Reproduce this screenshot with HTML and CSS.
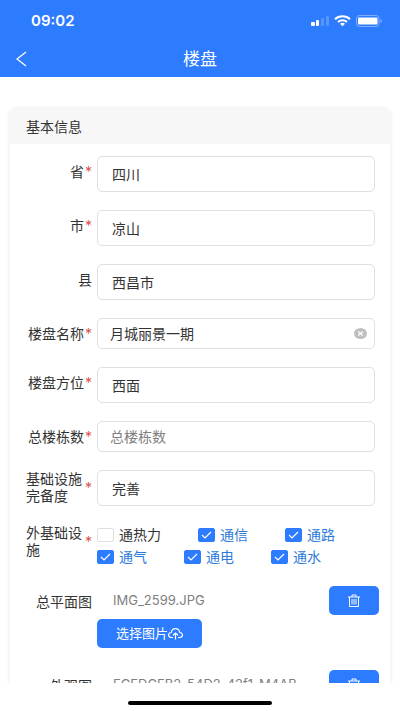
FILE: index.html
```html
<!DOCTYPE html>
<html lang="zh-CN">
<head>
<meta charset="utf-8">
<meta name="viewport" content="width=device-width, initial-scale=1">
<title>楼盘</title>
<link rel="stylesheet" href="styles.css">
</head>
<body>
<header class="top">
  <div class="status">
    <span class="time">09:02</span>
    <div class="status-icons">
      <svg width="18" height="12" viewBox="0 0 18 12" fill="#fff" aria-hidden="true">
        <rect x="0" y="7" width="4" height="4" rx="1"/><rect x="5" y="5" width="3" height="6" rx="1"/>
        <rect x="10" y="3" width="3" height="8" rx="1" opacity=".2"/><rect x="15" y="1" width="3" height="10" rx="1" opacity=".2"/>
      </svg>
      <svg width="17" height="12" viewBox="0 0 17 12" fill="none" stroke="#fff" stroke-width="2" aria-hidden="true">
        <path d="M1 4.200C5 .2 12 .2 16 4.200M4 7C6.500 4.700 10.500 4.700 13 7"/><path d="M6 8.700Q8.500 7 11 8.700L8.500 11.200Z" fill="#fff" stroke="none"/>
      </svg>
      <svg width="26" height="12" viewBox="0 0 26 12" aria-hidden="true">
        <rect x=".5" y=".5" width="22.500" height="11" rx="3" fill="none" stroke="#fff" opacity=".4"/>
        <rect x="2" y="2.500" width="19.500" height="7" rx="1" fill="#fff"/><path d="M24.500 4v4q1.500-.5 1.500-2t-1.500-2" fill="#fff" opacity=".4"/>
      </svg>
    </div>
  </div>
  <nav class="nav">
    <button class="back" type="button" aria-label="返回">
      <svg width="11" height="16" viewBox="0 0 11 16" fill="none" stroke="#fff" stroke-width="1.300"><path d="M10 1L1 8l9 7"/></svg>
    </button>
    <h1>楼盘</h1>
  </nav>
</header>
<main class="content">
  <form class="card">
    <h2>基本信息</h2>
    <div class="rows">
      <div class="row"><label for="prov"><span>省</span><i>*</i></label><input class="box pick" id="prov" value="四川"></div>
      <div class="row"><label for="city"><span>市</span><i>*</i></label><input class="box pick" id="city" value="凉山"></div>
      <div class="row"><label for="county"><span>县</span></label><input class="box pick" id="county" value="西昌市"></div>
      <div class="row"><label for="name"><span>楼盘名称</span><i>*</i></label>
        <div class="box clearable"><input id="name" value="月城丽景一期">
          <button type="button" class="clear" aria-label="清除"><svg width="13" height="11" viewBox="0 0 13 11"><ellipse cx="6.500" cy="5.500" rx="6.500" ry="5.500" fill="#bfbfbf"/><path d="M4.200 3.500l4.600 4M8.800 3.500l-4.600 4" stroke="#fff" stroke-width="1.200"/></svg></button>
        </div></div>
      <div class="row"><label for="side"><span>楼盘方位</span><i>*</i></label><input class="box pick" id="side" value="西面"></div>
      <div class="row"><label for="total"><span>总楼栋数</span><i>*</i></label><input class="box" id="total" placeholder="总楼栋数"></div>
      <div class="row"><label for="infra"><span>基础设施完备度</span><i>*</i></label><input class="box pick" id="infra" value="完善"></div>
      <div class="row" role="group" aria-labelledby="outer">
        <div class="label" id="outer"><span>外基础设施</span><i>*</i></div>
        <div class="checks">
          <label><input type="checkbox"><span>通热力</span></label>
          <label><input type="checkbox" checked><span>通信</span></label>
          <label><input type="checkbox" checked><span>通路</span></label>
          <label><input type="checkbox" checked><span>通气</span></label>
          <label><input type="checkbox" checked><span>通电</span></label>
          <label><input type="checkbox" checked><span>通水</span></label>
        </div>
      </div>
      <div class="row">
        <div class="label"><span>总平面图</span></div>
        <div class="upload">
          <div class="file"><span>IMG_2599.JPG</span>
            <button type="button" class="btn del" aria-label="删除"><svg width="12" height="13" viewBox="0 0 12 13" fill="none" stroke="#fff"><path d="M0 3h12M4 3V1h4v2M1.500 3v9.500h9V3M4 5v5.500M6 5v5.500M8 5v5.500"/></svg></button></div>
          <button type="button" class="btn choose">选择图片<svg width="15" height="12" viewBox="0 0 15 12" fill="none" stroke="#fff" stroke-width="1.200"><path d="M5 9.500H3.500a2.800 2.500 0 0 1-.3-5C3.700 2 5.500.7 7.500.7s3.800 1.300 4.300 3.800a2.800 2.500 0 0 1-.3 5H10M7.500 11.500V5M5 7.200L7.500 5 10 7.200"/></svg></button>
        </div>
      </div>
      <div class="row">
        <div class="label"><span>外观图</span></div>
        <div class="upload">
          <div class="file"><span>ECEDCFB2-54D2-42f1-M4AB</span>
            <button type="button" class="btn del" aria-label="删除"><svg width="12" height="13" viewBox="0 0 12 13" fill="none" stroke="#fff"><path d="M0 3h12M4 3V1h4v2M1.500 3v9.500h9V3M4 5v5.500M6 5v5.500M8 5v5.500"/></svg></button></div>
        </div>
      </div>
    </div>
  </form>
</main>
<footer class="home"><div></div></footer>
</body>
</html>
```
FILE: styles.css
```css
* { box-sizing: border-box; }
body {
  margin: 0;
  height: 100vh;
  display: flex;
  flex-direction: column;
  background: #fff;
  color: #333;
  font: 14px/17px Inter, "Noto Sans CJK SC", sans-serif;
}
button, input { font: inherit; color: inherit; margin: 0; padding: 0; }
button { border: 0; background: none; }
svg { display: block; flex: none; }
.top { flex: none; background: #2d7bff; color: #fff; }
.status {
  height: 41px;
  padding: 0 18px 0 31px;
  display: flex;
  align-items: center;
  justify-content: space-between;
}
.time { font-size: 15px; font-weight: 600; }
.status-icons { display: flex; gap: 5px; }
.nav {
  height: 36px;
  padding: 0 16px;
  display: grid;
  grid-template-columns: 24px 1fr 24px;
  align-items: center;
}
.back { height: 24px; }
.nav h1 { margin: 0; font-size: 17px; font-weight: 400; text-align: center; }
.content { flex: 1; min-height: 0; overflow: hidden; padding: 32px 10px 0; }
.card { border-radius: 5px; box-shadow: 0 0 5px rgba(0, 0, 0, .1); }
.card h2 {
  margin: 0;
  padding: 0 16px;
  font-size: 14px;
  line-height: 35px;
  font-weight: 400;
  background: #f7f7f7;
  border-radius: 5px 5px 0 0;
}
.rows { padding: 12px 15px 18px 16px; display: grid; gap: 18px; }
.row {
  display: grid;
  grid-template-columns: 66px 1fr;
  column-gap: 5px;
  align-items: start;
}
.row > label, .label {
  min-height: 31px;
  display: flex;
  align-items: center;
  justify-content: flex-end;
}
.label i, .row > label i { flex: none; width: 8px; color: #d9534f; font-style: normal; text-align: right; }
.box {
  width: 100%;
  min-width: 0;
  height: 31px;
  padding: 0 12px;
  border: 1px solid #e0e0e0;
  border-radius: 5px;
  background: #fff;
  outline: 0;
}
.box.pick { height: 36px; padding: 0 14px; }
.box::placeholder { color: #808080; opacity: 1; }
.clearable { display: flex; align-items: center; padding-right: 7px; }
.clearable input { flex: 1; min-width: 0; border: 0; outline: 0; }
.checks { display: flex; flex-wrap: wrap; column-gap: 37px; }
.checks label { display: flex; align-items: center; gap: 5px; line-height: 22px; }
.checks input {
  appearance: none;
  width: 17px;
  height: 14px;
  border: 1px solid #e0e0e0;
  border-radius: 2px;
}
.checks input:checked {
  border-color: #2d7bff;
  background: #2d7bff url("data:image/svg+xml,%3Csvg xmlns='http://www.w3.org/2000/svg' viewBox='0 0 15 12'%3E%3Cpath d='M3 6l3 3 6-6' fill='none' stroke='white' stroke-width='1.200'/%3E%3C/svg%3E") center / 15px 12px no-repeat;
}
.checks input:checked + span { color: #2d7bd8; }
.upload { display: grid; gap: 4px; padding-bottom: 4px; }
.file {
  display: flex;
  align-items: center;
  justify-content: space-between;
  padding-left: 16px;
  margin-right: -4px;
  font-size: 13px;
  color: #808080;
}
.btn {
  height: 29px;
  display: flex;
  align-items: center;
  justify-content: center;
  border-radius: 5px;
  background: #2d7bff;
  color: #fff;
}
.del { width: 50px; }
.choose { width: 105px; font-size: 13px; }
.home { flex: none; height: 28px; display: flex; justify-content: center; align-items: flex-end; padding-bottom: 6px; }
.home div { width: 36%; height: 4px; border-radius: 2px; background: #000; }
```
